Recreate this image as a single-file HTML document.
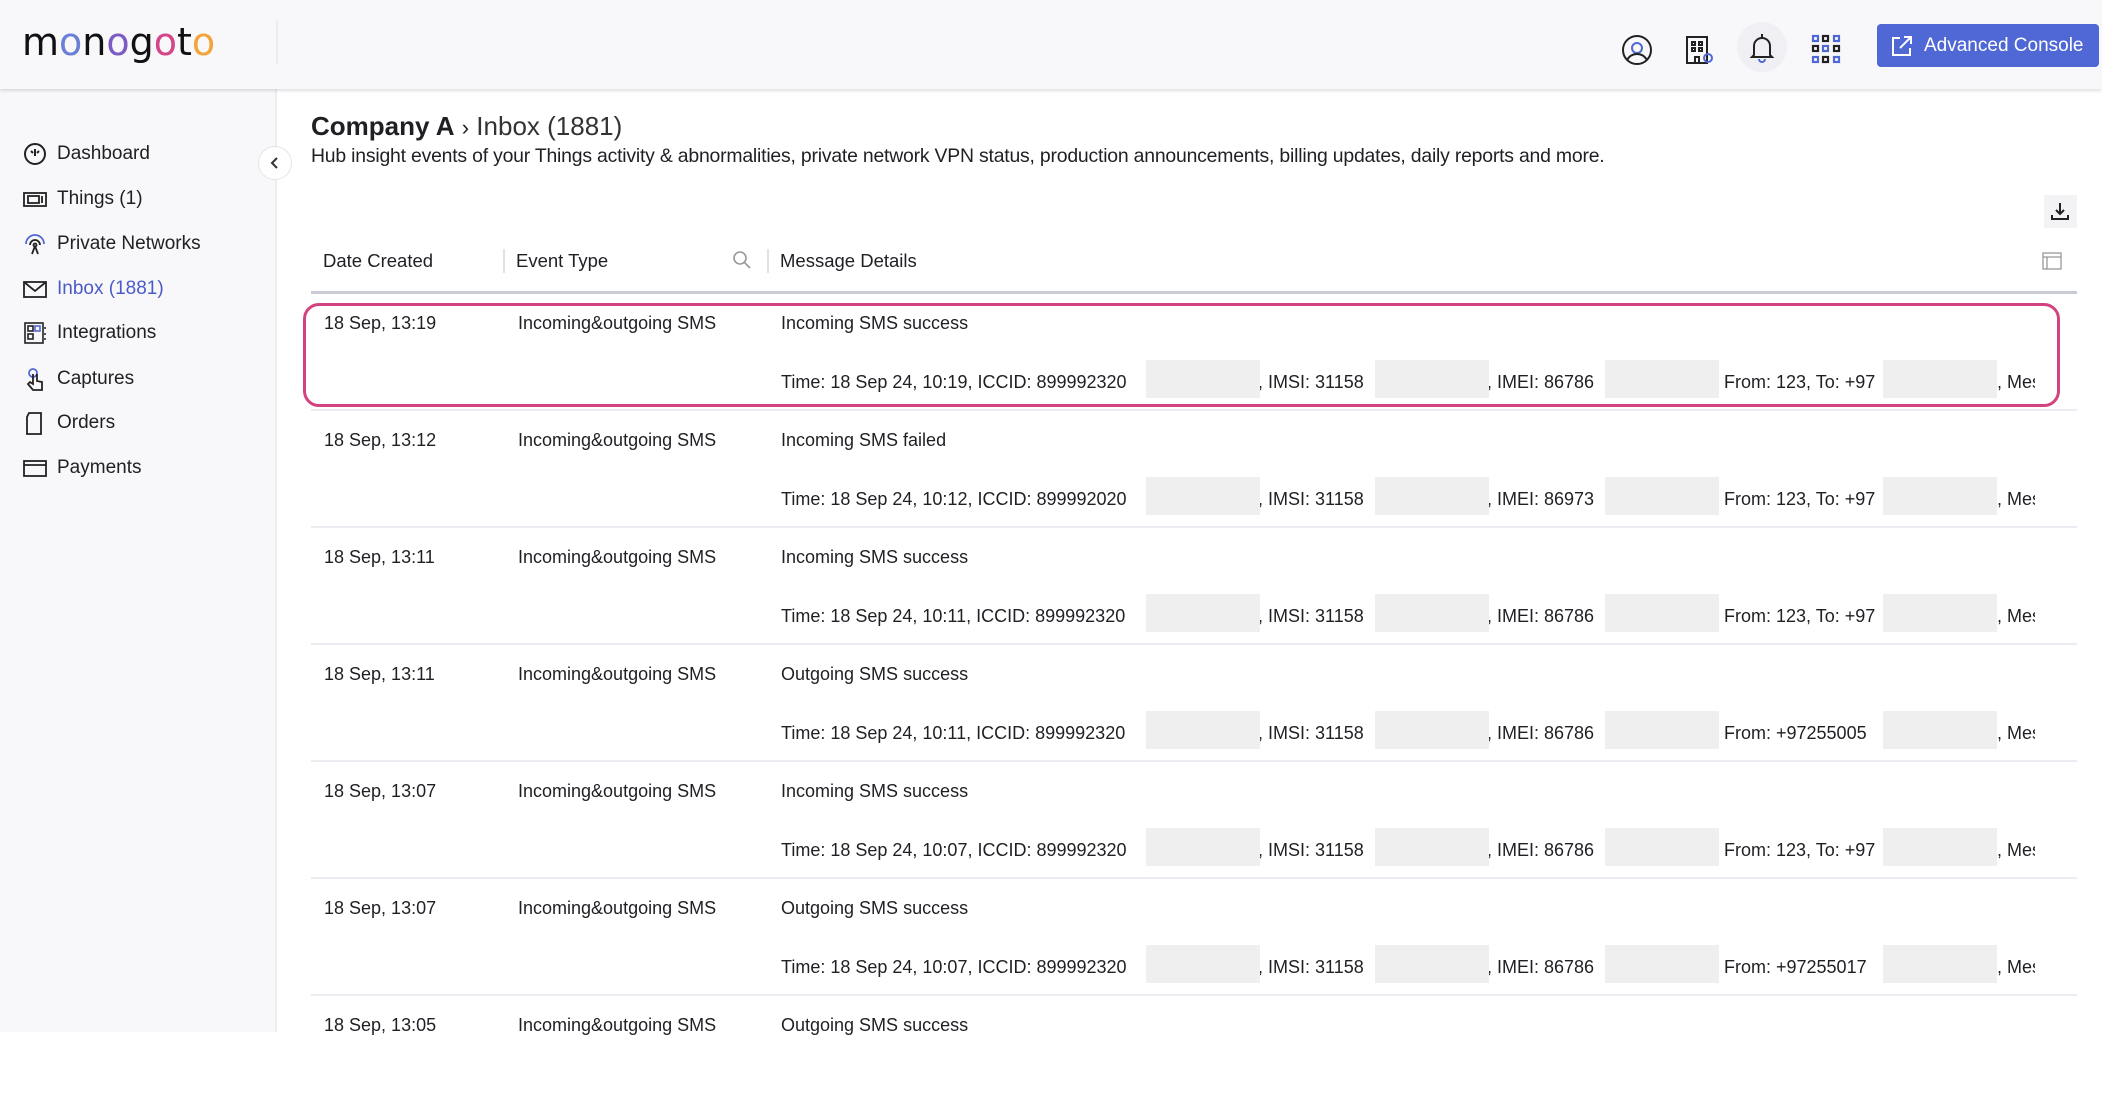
<!DOCTYPE html>
<html><head><meta charset="utf-8">
<style>
*{margin:0;padding:0;box-sizing:border-box}
body{width:2102px;height:1032px;overflow:hidden;background:#fff;font-family:"Liberation Sans",sans-serif;color:#1f1f24;position:relative}
.hdr{position:absolute;left:0;top:0;width:2102px;height:89px;background:#f8f8fb;box-shadow:0 2px 3px rgba(0,0,0,.12);z-index:3}
.side{position:absolute;left:0;top:89px;width:277px;height:943px;background:#f8f8fb;border-right:2px solid #ececf1}
.nav{position:absolute;left:22px;font-size:19px;height:24px;line-height:24px;display:flex;align-items:center}
.nav svg{width:26px;height:26px;margin-right:9px}
.abs{position:absolute;white-space:nowrap}
.row{position:absolute;left:0;width:2102px;height:117px}
.row::after{content:"";position:absolute;left:311px;width:1766px;bottom:0;height:2px;background:#ebedf2}
.row.last::after{display:none}
.row span{position:absolute;white-space:nowrap;font-size:18px;line-height:22px;overflow:hidden}
.red{position:absolute;background:#efefef;height:38px;width:114px}
</style></head><body>
<div class="hdr">
 <div class="abs" style="left:22px;top:20px;font-size:38px;letter-spacing:0px;font-family:'DejaVu Sans',sans-serif">
  <span style="color:#111">m</span><span style="color:#6b7fd6">o</span><span style="color:#111">n</span><span style="color:#7b5bc4">o</span><span style="color:#111">g</span><span style="color:#d4458a">o</span><span style="color:#111">t</span><span style="color:#f2a53a">o</span></div>
 <div class="abs" style="left:276px;top:20px;width:2px;height:44px;background:#ebebf0"></div>
 <svg class="abs" style="left:1621px;top:34px" width="32" height="32" viewBox="0 0 32 32" fill="none" stroke="#222" stroke-width="2"><circle cx="16" cy="16" r="14"/><circle cx="16" cy="14" r="5" stroke="#5068d5"/><path d="M6 26c3-5 7-6 10-6s7 1 10 6"/></svg>
 <svg class="abs" style="left:1683px;top:34px" width="32" height="32" viewBox="0 0 32 32" fill="none" stroke="#222" stroke-width="2"><rect x="4" y="3" width="20" height="26"/><rect x="9" y="8" width="3" height="3"/><rect x="16" y="8" width="3" height="3"/><rect x="9" y="14" width="3" height="3"/><rect x="16" y="14" width="3" height="3"/><path d="M12 29v-6h4v6"/><circle cx="25" cy="24" r="4" stroke="#5068d5"/></svg>
 <div class="abs" style="left:1737px;top:22px;width:50px;height:50px;border-radius:50%;background:#efeff4"></div>
 <svg class="abs" style="left:1746px;top:31px" width="32" height="32" viewBox="0 0 32 32" fill="none" stroke="#222" stroke-width="2"><path d="M8 24V15a8 8 0 0 1 16 0v9l2 2H6z"/><path d="M16 3v3"/><path d="M13 28a3 3 0 0 0 6 0" stroke="#5068d5"/></svg>
 <svg class="abs" style="left:1811px;top:34px" width="30" height="30" viewBox="0 0 30 30" fill="none" stroke-width="2.2"><g stroke="#5068d5"><rect x="2" y="2" width="5" height="5"/><rect x="23" y="2" width="5" height="5"/><rect x="12" y="12" width="5" height="5"/><rect x="2" y="23" width="5" height="5"/><rect x="23" y="23" width="5" height="5"/></g><g stroke="#222"><rect x="12" y="2" width="5" height="5"/><rect x="2" y="12" width="5" height="5"/><rect x="23" y="12" width="5" height="5"/><rect x="12" y="23" width="5" height="5"/></g></svg>
 <div class="abs" style="left:1877px;top:24px;width:222px;height:43px;background:#5068d5;border-radius:4px;color:#fff;font-size:19px;line-height:43px;padding-left:47px">Advanced Console</div>
 <svg class="abs" style="left:1890px;top:34px" width="24" height="24" viewBox="0 0 24 24" fill="none" stroke="#fff" stroke-width="2"><path d="M10 4H3v17h17v-7"/><path d="M14 3h7v7M21 3 10 14"/></svg>
</div>
<div class="side"></div>
<div class="nav" style="top:142px"><svg viewBox="0 0 26 26" fill="none" stroke="#222" stroke-width="2"><circle cx="13" cy="13" r="10"/><path d="M13 8v7M9 10l2 2M17 10l-2 2"/></svg>Dashboard</div>
<div class="nav" style="top:187px"><svg viewBox="0 0 26 26" fill="none" stroke="#222" stroke-width="1.8"><rect x="2" y="7" width="22" height="13"/><rect x="6" y="10" width="11" height="7"/><path d="M20 10v7"/></svg>Things (1)</div>
<div class="nav" style="top:232px"><svg viewBox="0 0 26 26" fill="none" stroke="#222" stroke-width="1.8"><path d="M4 13a9 9 0 0 1 18 0" stroke="#5068d5"/><path d="M8 14a5 5 0 0 1 10 0"/><circle cx="13" cy="14" r="1.5"/><path d="M13 15l-3 8M13 15l3 8"/></svg>Private Networks</div>
<div class="nav" style="top:277px;color:#4a5bc6"><svg viewBox="0 0 26 26" fill="none" stroke="#222" stroke-width="1.8"><rect x="2" y="6" width="22" height="15"/><path d="M2 6l11 9 11-9"/></svg>Inbox (1881)</div>
<div class="nav" style="top:321px"><svg viewBox="0 0 26 26" fill="none" stroke="#222" stroke-width="1.6"><rect x="3" y="3" width="18" height="20"/><rect x="6" y="6" width="5" height="5"/><rect x="13" y="6" width="5" height="5" stroke="#5068d5"/><rect x="6" y="14" width="5" height="5"/><path d="M22 8h2M22 14h2M22 19h2"/></svg>Integrations</div>
<div class="nav" style="top:367px"><svg viewBox="0 0 26 26" fill="none" stroke="#222" stroke-width="1.8"><circle cx="11" cy="7" r="4" stroke="#5068d5"/><path d="M11 8v10l-3-2-2 2 5 6h9v-8l-5-1v-7"/></svg>Captures</div>
<div class="nav" style="top:411px"><svg viewBox="0 0 26 26" fill="none" stroke="#222" stroke-width="1.8"><path d="M7 3h12v21H5V7z"/></svg>Orders</div>
<div class="nav" style="top:456px"><svg viewBox="0 0 26 26" fill="none" stroke="#222" stroke-width="1.8"><rect x="2" y="6" width="22" height="15"/><path d="M2 10h22"/></svg>Payments</div>
<div class="abs" style="left:258px;top:146px;width:34px;height:34px;border-radius:50%;background:#fff;border:1px solid #e3e4ea;z-index:2"></div>
<svg class="abs" style="left:266px;top:154px;z-index:3" width="18" height="18" viewBox="0 0 18 18" fill="none" stroke="#333" stroke-width="2"><path d="M11 4 6 9l5 5"/></svg>

<div class="abs" style="left:311px;top:111px;font-size:26px"><b>Company A</b> <span style="font-size:22px">›</span> <span style="font-weight:300;color:#333">Inbox (1881)</span></div>
<div class="abs" style="left:311px;top:145px;font-size:19.4px;letter-spacing:-0.2px">Hub insight events of your Things activity &amp; abnormalities, private network VPN status, production announcements, billing updates, daily reports and more.</div>
<div class="abs" style="left:2044px;top:195px;width:33px;height:33px;background:#f3f3f6"></div>
<svg class="abs" style="left:2049px;top:200px" width="22" height="22" viewBox="0 0 22 22" fill="none" stroke="#222" stroke-width="2"><path d="M11 3v11M7 10l4 4 4-4M3 15v4h16v-4"/></svg>
<svg class="abs" style="left:2041px;top:250px" width="22" height="22" viewBox="0 0 22 22" fill="none" stroke="#999" stroke-width="1.3"><rect x="2" y="3" width="18" height="16"/><path d="M2 7h18M6 7v12"/></svg>

<div class="abs" style="left:323px;top:250px;font-size:18.5px">Date Created</div>
<div class="abs" style="left:503px;top:249px;width:2px;height:24px;background:#e0e2ea"></div>
<div class="abs" style="left:516px;top:250px;font-size:18.5px">Event Type</div>
<svg class="abs" style="left:732px;top:250px" width="20" height="20" viewBox="0 0 20 20" fill="none" stroke="#999" stroke-width="1.6"><circle cx="8" cy="8" r="6"/><path d="M12.5 12.5 18 18"/></svg>
<div class="abs" style="left:767px;top:249px;width:2px;height:24px;background:#e0e2ea"></div>
<div class="abs" style="left:780px;top:250px;font-size:18.5px">Message Details</div>
<div class="abs" style="left:311px;top:291px;width:1766px;height:3px;background:#c9ccd7"></div>

<div class="row" style="top:294px"><span style="left:324px;top:18px">18 Sep, 13:19</span><span style="left:518px;top:18px">Incoming&amp;outgoing SMS</span><span style="left:781px;top:18px">Incoming SMS success</span><span style="left:781px;top:77px;width:365px">Time: 18 Sep 24, 10:19, ICCID: 899992320</span><span style="left:1258px;top:77px">, IMSI: 31158</span><span style="left:1487px;top:77px">, IMEI: 86786</span><span style="left:1724px;top:77px">From: 123, To: +97</span><span style="left:1997px;top:77px;width:38px">, Message</span><div class="red" style="left:1146px;top:66px"></div><div class="red" style="left:1375px;top:66px"></div><div class="red" style="left:1605px;top:66px"></div><div class="red" style="left:1883px;top:66px"></div></div>
<div class="row" style="top:411px"><span style="left:324px;top:18px">18 Sep, 13:12</span><span style="left:518px;top:18px">Incoming&amp;outgoing SMS</span><span style="left:781px;top:18px">Incoming SMS failed</span><span style="left:781px;top:77px;width:365px">Time: 18 Sep 24, 10:12, ICCID: 899992020</span><span style="left:1258px;top:77px">, IMSI: 31158</span><span style="left:1487px;top:77px">, IMEI: 86973</span><span style="left:1724px;top:77px">From: 123, To: +97</span><span style="left:1997px;top:77px;width:38px">, Message</span><div class="red" style="left:1146px;top:66px"></div><div class="red" style="left:1375px;top:66px"></div><div class="red" style="left:1605px;top:66px"></div><div class="red" style="left:1883px;top:66px"></div></div>
<div class="row" style="top:528px"><span style="left:324px;top:18px">18 Sep, 13:11</span><span style="left:518px;top:18px">Incoming&amp;outgoing SMS</span><span style="left:781px;top:18px">Incoming SMS success</span><span style="left:781px;top:77px;width:365px">Time: 18 Sep 24, 10:11, ICCID: 899992320</span><span style="left:1258px;top:77px">, IMSI: 31158</span><span style="left:1487px;top:77px">, IMEI: 86786</span><span style="left:1724px;top:77px">From: 123, To: +97</span><span style="left:1997px;top:77px;width:38px">, Message</span><div class="red" style="left:1146px;top:66px"></div><div class="red" style="left:1375px;top:66px"></div><div class="red" style="left:1605px;top:66px"></div><div class="red" style="left:1883px;top:66px"></div></div>
<div class="row" style="top:645px"><span style="left:324px;top:18px">18 Sep, 13:11</span><span style="left:518px;top:18px">Incoming&amp;outgoing SMS</span><span style="left:781px;top:18px">Outgoing SMS success</span><span style="left:781px;top:77px;width:365px">Time: 18 Sep 24, 10:11, ICCID: 899992320</span><span style="left:1258px;top:77px">, IMSI: 31158</span><span style="left:1487px;top:77px">, IMEI: 86786</span><span style="left:1724px;top:77px">From: +97255005</span><span style="left:1997px;top:77px;width:38px">, Message</span><div class="red" style="left:1146px;top:66px"></div><div class="red" style="left:1375px;top:66px"></div><div class="red" style="left:1605px;top:66px"></div><div class="red" style="left:1883px;top:66px"></div></div>
<div class="row" style="top:762px"><span style="left:324px;top:18px">18 Sep, 13:07</span><span style="left:518px;top:18px">Incoming&amp;outgoing SMS</span><span style="left:781px;top:18px">Incoming SMS success</span><span style="left:781px;top:77px;width:365px">Time: 18 Sep 24, 10:07, ICCID: 899992320</span><span style="left:1258px;top:77px">, IMSI: 31158</span><span style="left:1487px;top:77px">, IMEI: 86786</span><span style="left:1724px;top:77px">From: 123, To: +97</span><span style="left:1997px;top:77px;width:38px">, Message</span><div class="red" style="left:1146px;top:66px"></div><div class="red" style="left:1375px;top:66px"></div><div class="red" style="left:1605px;top:66px"></div><div class="red" style="left:1883px;top:66px"></div></div>
<div class="row" style="top:879px"><span style="left:324px;top:18px">18 Sep, 13:07</span><span style="left:518px;top:18px">Incoming&amp;outgoing SMS</span><span style="left:781px;top:18px">Outgoing SMS success</span><span style="left:781px;top:77px;width:365px">Time: 18 Sep 24, 10:07, ICCID: 899992320</span><span style="left:1258px;top:77px">, IMSI: 31158</span><span style="left:1487px;top:77px">, IMEI: 86786</span><span style="left:1724px;top:77px">From: +97255017</span><span style="left:1997px;top:77px;width:38px">, Message</span><div class="red" style="left:1146px;top:66px"></div><div class="red" style="left:1375px;top:66px"></div><div class="red" style="left:1605px;top:66px"></div><div class="red" style="left:1883px;top:66px"></div></div>
<div class="row last" style="top:996px"><span style="left:324px;top:18px">18 Sep, 13:05</span><span style="left:518px;top:18px">Incoming&amp;outgoing SMS</span><span style="left:781px;top:18px">Outgoing SMS success</span></div>
<div class="abs" style="left:303px;top:303px;width:1757px;height:104px;border:3px solid #d2437f;border-radius:16px"></div>
</body></html>
